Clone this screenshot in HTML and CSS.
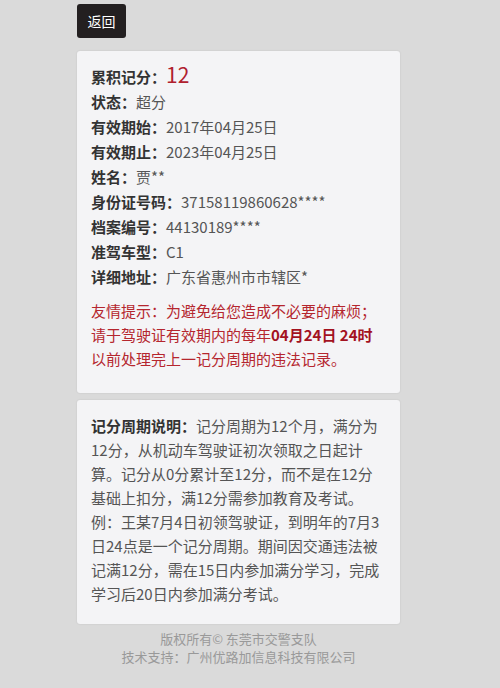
FILE: index.html
```html
<!DOCTYPE html>
<html lang="zh-CN">
<head>
    <meta charset="UTF-8">
    <meta name="viewport" content="width=device-width, initial-scale=1.0">
    <title>驾驶证记分查询</title>
    <link rel="stylesheet" href="styles.css">
</head>
<body>
    <div class="page">
        <a class="back-btn" href="#">返回</a>

        <div class="card info-card">
            <div class="row"><span class="label">累积记分：</span><span class="score">12</span></div>
            <div class="row"><span class="label">状态：</span><span class="value">超分</span></div>
            <div class="row"><span class="label">有效期始：</span><span class="value">2017年04月25日</span></div>
            <div class="row"><span class="label">有效期止：</span><span class="value">2023年04月25日</span></div>
            <div class="row"><span class="label">姓名：</span><span class="value">贾**</span></div>
            <div class="row"><span class="label">身份证号码：</span><span class="value">37158119860628****</span></div>
            <div class="row"><span class="label">档案编号：</span><span class="value">44130189****</span></div>
            <div class="row"><span class="label">准驾车型：</span><span class="value">C1</span></div>
            <div class="row"><span class="label">详细地址：</span><span class="value">广东省惠州市市辖区*</span></div>

            <p class="tip">
                友情提示：为避免给您造成不必要的麻烦；<br>
                请于驾驶证有效期内的每年<b>04月24日 24时</b><br>
                以前处理完上一记分周期的违法记录。
            </p>
        </div>

        <div class="card note-card">
            <p><b>记分周期说明：</b>记分周期为12个月，满分为12分，从机动车驾驶证初次领取之日起计算。记分从0分累计至12分，而不是在12分基础上扣分，满12分需参加教育及考试。<br>例：王某7月4日初领驾驶证，到明年的7月3日24点是一个记分周期。期间因交通违法被记满12分，需在15日内参加满分学习，完成学习后20日内参加满分考试。</p>
        </div>

        <div class="footer">
            版权所有© 东莞市交警支队<br>
            技术支持：广州优路加信息科技有限公司
        </div>
    </div>
</body>
</html>
```

FILE: styles.css
```css
body {
    margin: 0;
    background-color: #dadada;
    font-family: "Noto Sans CJK SC", "Noto Sans", sans-serif;
    color: #555;
}
.page {
    width: 323px;
    padding: 4px 0 0 77px;
}
.back-btn {
    display: inline-block;
    width: 49px;
    height: 34px;
    line-height: 34px;
    text-align: center;
    background-color: #231f20;
    color: #fff;
    font-size: 14px;
    text-decoration: none;
    border-radius: 3px;
}
.card {
    background-color: #f4f4f6;
    border-radius: 3px;
    box-shadow: 0 0 2px rgba(0, 0, 0, 0.12);
    padding: 0 14px;
}
.info-card {
    margin-top: 13px;
    padding-top: 13px;
    padding-bottom: 22px;
}
.row {
    font-size: 15px;
    line-height: 25px;
}
.label {
    font-weight: bold;
    color: #333;
}
.value {
    color: #555;
}
.score {
    color: #b0202e;
    font-size: 21px;
    line-height: 20px;
}
.tip {
    margin: 10px 0 0;
    color: #b5262e;
    font-size: 15px;
    line-height: 24px;
}
.tip b {
    color: #a3121f;
}
.note-card {
    margin-top: 7px;
    padding-top: 14px;
    padding-bottom: 18px;
}
.note-card p {
    margin: 0;
    font-size: 15px;
    line-height: 24px;
    color: #555;
}
.note-card b {
    color: #333;
}
.footer {
    margin-top: 6px;
    text-align: center;
    color: #999;
    font-size: 13px;
    line-height: 18px;
}
```
